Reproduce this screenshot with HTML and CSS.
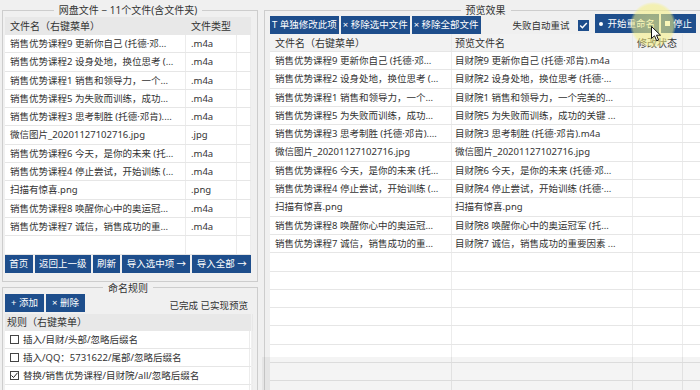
FILE: index.html
```html
<!DOCTYPE html>
<html lang="zh-CN">
<head>
    <meta charset="UTF-8">
    <title>批量重命名</title>
    <link rel="stylesheet" href="styles.css">
</head>
<body>

    <div class="app">
        <div class="side">
            <fieldset class="group files">
                <legend>网盘文件 − 11个文件(含文件夹)</legend>
                <div class="grid file-grid">
                    <div class="row head"><span>文件名（右键菜单）</span><span>文件类型</span><span></span></div>
                    <div class="row"><span>销售优势课程9 更新你自己 (托德·邓...</span><span>.m4a</span><span></span></div>
                    <div class="row"><span>销售优势课程2 设身处地，换位思考 (...</span><span>.m4a</span><span></span></div>
                    <div class="row"><span>销售优势课程1 销售和领导力，一个...</span><span>.m4a</span><span></span></div>
                    <div class="row"><span>销售优势课程5 为失败而训练，成功...</span><span>.m4a</span><span></span></div>
                    <div class="row"><span>销售优势课程3 思考制胜 (托德·邓肯)....</span><span>.m4a</span><span></span></div>
                    <div class="row"><span>微信图片_20201127102716.jpg</span><span>.jpg</span><span></span></div>
                    <div class="row"><span>销售优势课程6 今天，是你的未来 (托...</span><span>.m4a</span><span></span></div>
                    <div class="row"><span>销售优势课程4 停止尝试，开始训练 (...</span><span>.m4a</span><span></span></div>
                    <div class="row"><span>扫描有惊喜.png</span><span>.png</span><span></span></div>
                    <div class="row"><span>销售优势课程8 唤醒你心中的奥运冠...</span><span>.m4a</span><span></span></div>
                    <div class="row"><span>销售优势课程7 诚信，销售成功的重...</span><span>.m4a</span><span></span></div>
                    <div class="row blank"><span></span><span></span><span></span></div>
                </div>
                <div class="btn-row">
                    <button class="btn">首页</button>
                    <button class="btn">返回上一级</button>
                    <button class="btn">刷新</button>
                    <button class="btn">导入选中项 →</button>
                    <button class="btn">导入全部 →</button>
                </div>
            </fieldset>

            <fieldset class="group rules">
                <legend>命名规则</legend>
                <div class="rule-bar">
                    <button class="btn">+ 添加</button>
                    <button class="btn">× 删除</button>
                    <span class="status">已完成 已实现预览</span>
                </div>
                <div class="grid rule-grid">
                    <div class="row head"><span>规则（右键菜单）</span><span></span></div>
                    <div class="row"><span><i class="box"></i>插入/目财/头部/忽略后缀名</span><span></span></div>
                    <div class="row"><span><i class="box"></i>插入/QQ：5731622/尾部/忽略后缀名</span><span></span></div>
                    <div class="row">
                        <span><i class="box"><svg viewBox="0 0 9 9" width="9" height="9"><polyline points="1.5,4.5 3.5,6.5 7.5,1.8" fill="none" stroke="#222" stroke-width="1"/></svg></i>替换/销售优势课程/目财院/all/忽略后缀名</span><span></span>
                    </div>
                    <div class="row blank"><span></span><span></span></div>
                </div>
            </fieldset>
        </div>

        <fieldset class="group preview">
            <legend>预览效果</legend>
            <div class="toolbar">
                <button class="btn">T 单独修改此项</button>
                <button class="btn">× 移除选中文件</button>
                <button class="btn">× 移除全部文件</button>
                <span class="retry">失败自动重试</span>
                <span class="check"><svg viewBox="0 0 11 11" width="11" height="11"><polyline points="2.2,5.6 4.4,7.8 8.8,3" fill="none" stroke="#fff" stroke-width="1.4"/></svg></span>
                <button class="btn big"><i class="dot"></i>开始重命名</button>
                <button class="btn big"><i class="sq"></i>停止</button>
            </div>
            <div class="grid preview-grid">
                <div class="row head"><span>文件名（右键菜单）</span><span>预览文件名</span><span>修改状态</span><span></span></div>
                <div class="row"><span>销售优势课程9 更新你自己 (托德·邓...</span><span>目财院9 更新你自己 (托德·邓肯).m4a</span><span></span><span></span></div>
                <div class="row"><span>销售优势课程2 设身处地，换位思考 (...</span><span>目财院2 设身处地，换位思考 (托德·...</span><span></span><span></span></div>
                <div class="row"><span>销售优势课程1 销售和领导力，一个...</span><span>目财院1 销售和领导力，一个完美的...</span><span></span><span></span></div>
                <div class="row"><span>销售优势课程5 为失败而训练，成功...</span><span>目财院5 为失败而训练，成功的关键 ...</span><span></span><span></span></div>
                <div class="row"><span>销售优势课程3 思考制胜 (托德·邓肯)....</span><span>目财院3 思考制胜 (托德·邓肯).m4a</span><span></span><span></span></div>
                <div class="row"><span>微信图片_20201127102716.jpg</span><span>微信图片_20201127102716.jpg</span><span></span><span></span></div>
                <div class="row"><span>销售优势课程6 今天，是你的未来 (托...</span><span>目财院6 今天，是你的未来 (托德·邓...</span><span></span><span></span></div>
                <div class="row"><span>销售优势课程4 停止尝试，开始训练 (...</span><span>目财院4 停止尝试，开始训练 (托德·...</span><span></span><span></span></div>
                <div class="row"><span>扫描有惊喜.png</span><span>扫描有惊喜.png</span><span></span><span></span></div>
                <div class="row"><span>销售优势课程8 唤醒你心中的奥运冠...</span><span>目财院8 唤醒你心中的奥运冠军 (托...</span><span></span><span></span></div>
                <div class="row"><span>销售优势课程7 诚信，销售成功的重...</span><span>目财院7 诚信，销售成功的重要因素 ...</span><span></span><span></span></div>
                <div class="row blank"><span></span><span></span><span></span><span></span></div>
                <div class="row blank"><span></span><span></span><span></span><span></span></div>
                <div class="row blank"><span></span><span></span><span></span><span></span></div>
                <div class="row blank"><span></span><span></span><span></span><span></span></div>
                <div class="row blank"><span></span><span></span><span></span><span></span></div>
                <div class="row blank"><span></span><span></span><span></span><span></span></div>
                <div class="row blank"><span></span><span></span><span></span><span></span></div>
                <div class="row blank"><span></span><span></span><span></span><span></span></div>
            </div>
        </fieldset>
    </div>

    <div class="caption-shade"></div>
    <div class="cursor-glow"></div>
    <svg class="cursor" viewBox="0 0 11 16" width="11" height="16">
        <path d="M0.5 0.5 L0.5 12.5 L3.5 9.8 L5.7 14.8 L7.6 14 L5.5 9.2 L9.5 9.2 Z" fill="#fff" stroke="#111" stroke-width="1"/>
    </svg>

</body>
</html>
```

FILE: styles.css
```css
* {
    margin: 0;
    padding: 0;
    box-sizing: border-box;
}

body {
    width: 700px;
    height: 390px;
    overflow: hidden;
    position: relative;
    background-color: #f0f0f0;
    color: #333;
    font-family: "Noto Sans", "Noto Sans CJK SC", sans-serif;
    font-size: 9.5px;
}

.app {
    display: grid;
    grid-template-columns: 256px 438px;
    column-gap: 6px;
    padding: 4px 0 0 2px;
    height: 400px;
}

.side {
    display: flex;
    flex-direction: column;
    min-width: 0;
}

.group {
    border: 1px solid #cdcdcd;
    min-width: 0;
}

.group legend {
    margin: 0 auto;
    padding: 0 5px;
    line-height: 12px;
    font-size: 10px;
    color: #333;
}

.files {
    padding: 1px 6px 8px 2px;
}

.rules {
    flex: 1;
    padding: 0 6px 0 2px;
}

.preview {
    padding: 0 0 0 5px;
}

/* tables */
.grid {
    background-color: #fff;
}

.row {
    display: grid;
    height: 18.3px;
    line-height: 18px;
    border-bottom: 1px solid #e6e6e6;
}

.row span {
    white-space: nowrap;
    overflow: hidden;
    padding-left: 5px;
    border-right: 1px solid #ececec;
}

.row.head {
    height: 18px;
    background-color: #e8e8e8;
    border-bottom: 0;
    font-size: 10px;
}

.row.head span {
    border-right-color: #e8e8e8;
}

.file-grid .row {
    grid-template-columns: 181px 51px 1fr;
}

.rule-grid .row {
    grid-template-columns: 245px 1fr;
}

.rule-grid .row.head {
    height: 17px;
    line-height: 17px;
}

.rule-grid .row span {
    padding-left: 2px;
}

.preview-grid .row {
    grid-template-columns: 182px 181px 50px 1fr;
}

.preview-grid .row.head {
    background-color: #f2f2f2;
    border-bottom: 1px solid #e6e6e6;
}

.preview-grid .row.head span {
    border-right-color: #e9e9e9;
}

.preview-grid .row.head span:nth-child(3) {
    padding-left: 4px;
}

.preview-grid .row span:nth-child(2) {
    padding-left: 3px;
}

.box {
    display: inline-flex;
    align-items: center;
    justify-content: center;
    width: 9px;
    height: 9px;
    margin: 0 4px 0 3px;
    vertical-align: -1px;
    border: 1px solid #444;
    background-color: #fff;
}

.box svg {
    display: block;
    flex: none;
}

/* buttons */
.btn {
    height: 18px;
    padding: 0 4px;
    border: 0;
    background-color: #1e4e8c;
    color: #fff;
    font: inherit;
    line-height: 18px;
    white-space: nowrap;
}

.btn-row {
    display: flex;
    gap: 2px;
}

.btn-row .btn {
    flex: auto;
}

.rule-bar {
    display: flex;
    align-items: center;
    gap: 2px;
    height: 18px;
    margin-bottom: 2px;
}

.rule-bar .btn {
    width: 39px;
}

.rule-bar .status {
    margin-left: auto;
    margin-right: 3px;
    margin-top: 4px;
}

.toolbar {
    display: flex;
    align-items: center;
    gap: 2px;
    height: 18px;
    margin-right: 5px;
}

.toolbar .btn {
    padding: 0 2px;
}

.retry {
    margin-left: auto;
    margin-right: 7px;
    white-space: nowrap;
}

.check {
    display: flex;
    flex: none;
    width: 11px;
    height: 11px;
    margin-right: 4px;
    background-color: #1e4e8c;
}

.toolbar .big {
    display: flex;
    align-items: center;
    height: 19px;
    margin-top: -3px;
    padding: 0 4px;
}

.dot {
    width: 4px;
    height: 4px;
    margin-right: 4px;
    border-radius: 50%;
    background-color: #fff;
}

.sq {
    width: 5px;
    height: 5px;
    margin-right: 3px;
    background-color: #fff;
}

/* screen recording overlays */
.caption-shade {
    position: absolute;
    left: 262px;
    top: 357px;
    width: 438px;
    height: 33px;
    background-color: rgba(0, 0, 0, 0.045);
}

.cursor-glow {
    position: absolute;
    left: 630px;
    top: 2px;
    width: 46px;
    height: 46px;
    border-radius: 50%;
    background: radial-gradient(circle, rgba(245, 240, 130, 0.62) 0%, rgba(245, 240, 130, 0.55) 62%, rgba(245, 240, 130, 0) 72%);
    pointer-events: none;
}

.cursor {
    position: absolute;
    left: 651px;
    top: 26px;
}
```
